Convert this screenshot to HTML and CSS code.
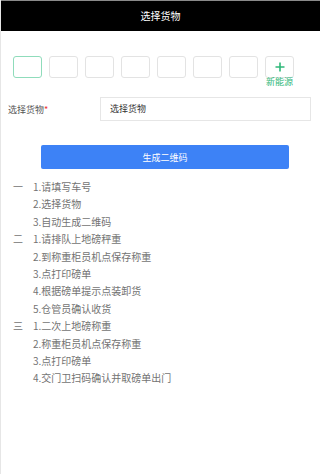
FILE: index.html
```html
<!DOCTYPE html>
<html lang="zh">
<head>
    <meta charset="UTF-8">
    <title>选择货物</title>
    <link rel="stylesheet" href="styles.css">
</head>
<body>
    <div class="page">
        <div class="header">选择货物</div>

        <!-- 车牌号输入 -->
        <div class="plate-row">
            <div class="plate-box active"></div>
            <div class="plate-box"></div>
            <div class="plate-box"></div>
            <div class="plate-box"></div>
            <div class="plate-box"></div>
            <div class="plate-box"></div>
            <div class="plate-box"></div>
            <div class="plate-extra">
                <div class="plate-box plus">
                    <svg width="10" height="10" viewBox="0 0 10 10">
                        <path d="M5 0.5v9M0.5 5h9" stroke="#2fb879" stroke-width="1.6" fill="none"/>
                    </svg>
                </div>
                <span class="extra-label">新能源</span>
            </div>
        </div>

        <!-- 货物选择 -->
        <div class="form-row">
            <label class="form-label">选择货物<span class="req">*</span></label>
            <div class="form-input">选择货物</div>
        </div>

        <button class="btn">生成二维码</button>

        <!-- 流程说明 -->
        <div class="steps">
            <div class="step"><span class="num">一</span><span>1.请填写车号</span></div>
            <div class="step"><span class="num"></span><span>2.选择货物</span></div>
            <div class="step"><span class="num"></span><span>3.自动生成二维码</span></div>
            <div class="step"><span class="num">二</span><span>1.请排队上地磅秤重</span></div>
            <div class="step"><span class="num"></span><span>2.到称重柜员机点保存称重</span></div>
            <div class="step"><span class="num"></span><span>3.点打印磅单</span></div>
            <div class="step"><span class="num"></span><span>4.根据磅单提示点装卸货</span></div>
            <div class="step"><span class="num"></span><span>5.仓管员确认收货</span></div>
            <div class="step"><span class="num">三</span><span>1.二次上地磅称重</span></div>
            <div class="step"><span class="num"></span><span>2.称重柜员机点保存称重</span></div>
            <div class="step"><span class="num"></span><span>3.点打印磅单</span></div>
            <div class="step"><span class="num"></span><span>4.交门卫扫码确认并取磅单出门</span></div>
        </div>
    </div>
</body>
</html>
```

FILE: styles.css
```css
* {
    box-sizing: border-box;
    margin: 0;
    padding: 0;
}

body {
    font-family: "Noto Sans CJK SC", "Noto Sans", sans-serif;
    background: #fff;
    color: #333;
}

.page {
    min-height: 474px;
    border-left: 1px solid #e6e6e6;
}

.header {
    height: 31px;
    border-top: 1px solid #8a8a8a;
    background: #000;
    color: #fff;
    font-size: 10px;
    line-height: 29px;
    text-align: center;
}

.plate-row {
    display: flex;
    align-items: flex-start;
    gap: 7px;
    padding-left: 12px;
    margin-top: 25px;
}

.plate-box {
    width: 29px;
    height: 22px;
    border: 1px solid #e3e3e3;
    border-radius: 3px;
    background: #fff;
}

.plate-box.active {
    border-color: #8fdcbb;
}

.plate-box.plus {
    display: flex;
    align-items: center;
    justify-content: center;
}

.plate-extra {
    display: flex;
    flex-direction: column;
    align-items: center;
}

.extra-label {
    font-size: 9px;
    line-height: 10px;
    color: #2fb879;
    margin-top: -1px;
}

.form-row {
    display: flex;
    align-items: center;
    padding-left: 7px;
    margin-top: 10px;
}

.form-label {
    width: 92px;
    font-size: 9px;
    color: #555;
}

.req {
    color: #e33;
}

.form-input {
    width: 211px;
    height: 24px;
    border: 1px solid #e6e6e6;
    padding-left: 9px;
    font-size: 9px;
    line-height: 22px;
    color: #333;
}

.btn {
    display: block;
    width: 248px;
    height: 24px;
    margin: 24px 0 0 40px;
    border: none;
    border-radius: 2px;
    background: #3d82f6;
    color: #fff;
    font-family: inherit;
    font-size: 9px;
}

.steps {
    margin-top: 9px;
    padding-left: 12px;
    font-size: 10px;
    line-height: 17.4px;
    color: #737373;
}

.step {
    display: flex;
}

.num {
    width: 20px;
}
```
